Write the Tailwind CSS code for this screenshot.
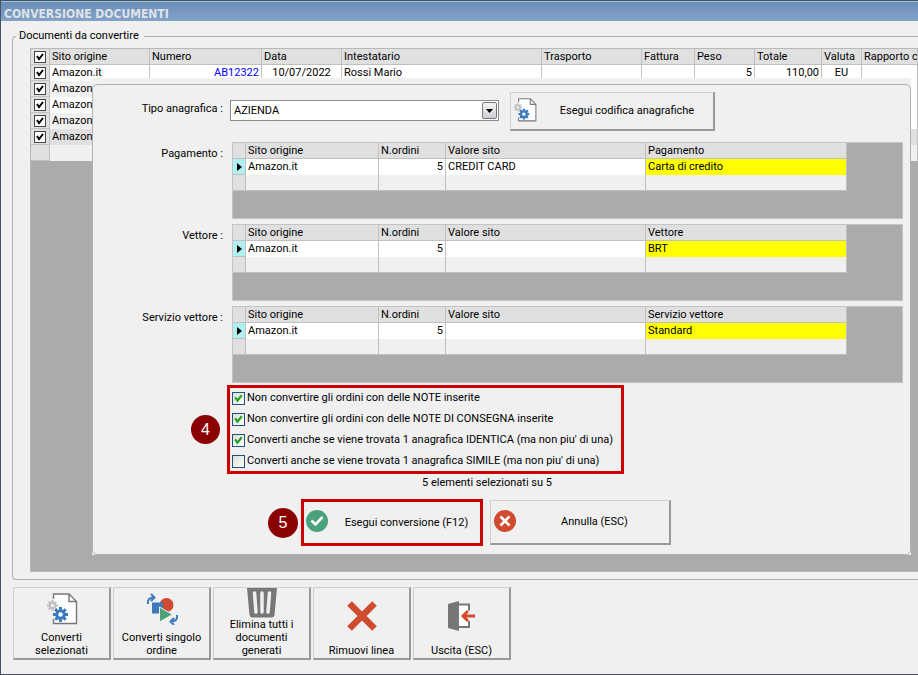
<!DOCTYPE html>
<html lang="it">
<head>
    <meta charset="UTF-8">
    <meta name="viewport" content="width=device-width, initial-scale=1.0">
    <title>Conversione documenti</title>
    <script src="https://cdn.jsdelivr.net/npm/@tailwindcss/browser@4"></script>
</head>
<body class="font-['Roboto','DejaVu_Sans_Condensed',sans-serif] text-[11px] leading-4 text-black bg-[#f0f0f0]">
    <!-- shared icons -->
    <svg class="hidden">
        <symbol id="gear" viewBox="-10 -10 20 20">
            <g fill="none" stroke="currentColor">
                <circle r="5" stroke-width="4"/>
                <path stroke-width="4" d="M0-5V-10M0 5V10M-5 0H-10M5 0H10M-4-4L-7-7M4 4L7 7M-4 4L-7 7M4-4L7-7"/>
            </g>
        </symbol>
        <symbol id="convert" viewBox="0 0 32 32">
            <path d="M7.5 1H23l7.500 7.500v22H7.500z" fill="#fff"/>
            <path d="M7.500 6V1H23l7.500 7.500v22H7.500V26M23 1v7.500h7.500" fill="none" stroke="#777" stroke-width="1.400"/>
            <use href="#gear" x="1" y="7" width="11" height="11" color="#c0c0c0"/>
            <use href="#gear" x="7" y="14" width="15" height="15" color="#3d7bbd"/>
        </symbol>
        <symbol id="tick" viewBox="0 0 12 12">
            <path d="M3 5l2 3 4-5" fill="none" stroke="currentColor" stroke-width="2"/>
        </symbol>
    </svg>

    <div class="min-h-screen flex flex-col overflow-hidden border-t border-l border-b border-[#465063]">
        <header class="h-5 pl-[3px] border-t border-[#a9c3de] bg-linear-to-b from-[#6a8db7] to-[#83a3c8]">
            <h1 class="font-['DejaVu_Sans_Condensed'] text-[12px] leading-6 font-bold text-[#dfe3e8]">CONVERSIONE DOCUMENTI</h1>
        </header>

        <main class="flex-1 pt-2 pl-[11px]">
            <fieldset class="relative min-w-0 flex flex-col border border-r-0 border-[#b0b0b0] rounded-l-[4px] pt-[5px] pl-[17px] pb-[7px]">
                <legend class="-ml-[14px] pl-[3px] pr-[5px] leading-[14px]">Documenti da convertire</legend>

                <div class="h-[524px] bg-[#ababab] border-t border-l border-b border-[#b8b8b8] overflow-hidden">
                    <table class="w-full table-fixed border-separate border-spacing-0 whitespace-nowrap [&_th]:h-4 [&_th]:px-[2px] [&_th]:text-left [&_th]:font-normal [&_th]:bg-[#e0e0e0] [&_th]:border-r [&_th]:border-b [&_th]:border-[#c0c0c0] [&_th]:leading-[15px] [&_th]:overflow-hidden [&_td]:h-4 [&_td]:px-[2px] [&_td]:border-r [&_td]:border-[#c0c0c0] [&_td:first-child]:bg-[#e0e0e0] [&_td:first-child]:border-b [&_td:first-child]:leading-[15px] [&_th:first-child]:px-[3px] [&_td:first-child]:px-[3px]">
                        <colgroup>
                            <col class="w-[19px]"><col class="w-[100px]"><col class="w-[112px]"><col class="w-[80px]"><col class="w-[200px]"><col class="w-[100px]"><col class="w-[53px]"><col class="w-[60px]"><col class="w-[67px]"><col class="w-[40px]"><col>
                        </colgroup>
                        <thead>
                            <tr>
                                <th><label class="relative block size-3"><input type="checkbox" checked aria-label="Seleziona tutti" class="peer block appearance-none size-3 bg-white border border-[#444]"><svg class="hidden peer-checked:block absolute left-0 top-0 size-3"><use href="#tick"/></svg></label></th>
                                <th>Sito origine</th><th>Numero</th><th>Data</th><th>Intestatario</th><th>Trasporto</th><th>Fattura</th><th>Peso</th><th>Totale</th><th>Valuta</th><th>Rapporto cambio</th>
                            </tr>
                        </thead>
                        <tbody>
                            <tr class="bg-white">
                                <td><label class="relative block size-3"><input type="checkbox" checked aria-label="Seleziona riga 1" class="peer block appearance-none size-3 bg-white border border-[#444]"><svg class="hidden peer-checked:block absolute left-0 top-0 size-3"><use href="#tick"/></svg></label></td>
                                <td>Amazon.it</td><td class="text-right text-[#0000ff]">AB12322</td><td class="text-center">10/07/2022</td><td>Rossi Mario</td><td></td><td></td><td class="text-right">5</td><td class="text-right">110,00</td><td class="text-center">EU</td><td></td>
                            </tr>
                            <tr class="bg-[#f0f0f0]">
                                <td><label class="relative block size-3"><input type="checkbox" checked aria-label="Seleziona riga 2" class="peer block appearance-none size-3 bg-white border border-[#444]"><svg class="hidden peer-checked:block absolute left-0 top-0 size-3"><use href="#tick"/></svg></label></td>
                                <td>Amazon.it</td><td></td><td></td><td></td><td></td><td></td><td></td><td></td><td></td><td class="bg-white"></td>
                            </tr>
                            <tr class="bg-white">
                                <td><label class="relative block size-3"><input type="checkbox" checked aria-label="Seleziona riga 3" class="peer block appearance-none size-3 bg-white border border-[#444]"><svg class="hidden peer-checked:block absolute left-0 top-0 size-3"><use href="#tick"/></svg></label></td>
                                <td>Amazon.it</td><td></td><td></td><td></td><td></td><td></td><td></td><td></td><td></td><td></td>
                            </tr>
                            <tr class="bg-[#f0f0f0]">
                                <td><label class="relative block size-3"><input type="checkbox" checked aria-label="Seleziona riga 4" class="peer block appearance-none size-3 bg-white border border-[#444]"><svg class="hidden peer-checked:block absolute left-0 top-0 size-3"><use href="#tick"/></svg></label></td>
                                <td>Amazon.it</td><td></td><td></td><td></td><td></td><td></td><td></td><td></td><td></td><td class="bg-white"></td>
                            </tr>
                            <tr class="bg-[#e0e0e0]">
                                <td><label class="relative block size-3"><input type="checkbox" checked aria-label="Seleziona riga 5" class="peer block appearance-none size-3 bg-white border border-[#444]"><svg class="hidden peer-checked:block absolute left-0 top-0 size-3"><use href="#tick"/></svg></label></td>
                                <td>Amazon.it</td><td></td><td></td><td></td><td></td><td></td><td></td><td></td><td></td><td></td>
                            </tr>
                            <tr class="bg-[#f0f0f0]">
                                <td></td><td></td><td></td><td></td><td></td><td></td><td></td><td></td><td></td><td></td><td></td>
                            </tr>
                        </tbody>
                    </table>
                </div>

                <!-- conversion dialog, over the documents grid -->
                <div role="dialog" aria-label="Conversione" class="absolute left-[79px] right-[7px] top-[35px] bg-[#f0f0f0] pt-[6px]">
                    <form class="border border-[#b0b0b0] rounded-[5px] pt-[7px] pr-[7px] pb-2">
                        <div class="flex items-start">
                            <label for="tipo" class="w-[130px] pt-[9px] text-right">Tipo anagrafica :</label>
                            <div class="relative ml-[7px] mt-2 w-[269px]">
                                <select id="tipo" class="block w-full h-[21px] appearance-none bg-white border border-[#8c8c8c] pl-[3px] outline-none">
                                    <option>AZIENDA</option>
                                </select>
                                <span class="absolute right-[2px] top-[2px] w-[15px] h-[17px] flex items-center justify-center rounded-[2px] border border-[#777] bg-linear-to-b from-[#f4f4f4] to-[#cfd0d4] pointer-events-none">
                                    <svg class="w-[7px] h-1" viewBox="0 0 7 4"><path d="M0 0h7L3.500 4z"/></svg>
                                </span>
                            </div>
                            <button type="button" class="relative ml-[11px] w-[205px] h-[39px] flex items-center border border-t-[#d0d0d0] border-l-[#d0d0d0] border-r-2 border-b-2 border-r-[#999] border-b-[#999]">
                                <svg class="absolute left-[2px] top-[5px] size-6"><use href="#convert"/></svg>
                                <span class="flex-1 pl-[30px]">Esegui codifica anagrafiche</span>
                            </button>
                        </div>

                        <div class="mt-[11px] flex flex-col gap-[5px] [&_table]:w-[614px] [&_table]:table-fixed [&_table]:border-separate [&_table]:border-spacing-0 [&_th]:h-4 [&_th]:px-[2px] [&_th]:text-left [&_th]:font-normal [&_th]:leading-[15px] [&_th]:bg-[#e0e0e0] [&_th]:border-r [&_th]:border-b [&_th]:border-[#c0c0c0] [&_td]:h-4 [&_td]:px-[2px] [&_td]:border-r [&_td]:border-[#c0c0c0] [&_tr:last-child_td]:border-b [&_tr:last-child_td]:leading-[15px]">
                            <div class="flex">
                                <div id="lbl-pagamento" class="w-[130px] pt-1 text-right">Pagamento :</div>
                                <div class="ml-[9px] flex-1 h-[77px] bg-[#ababab] border border-[#c4c4c4]">
                                    <table aria-labelledby="lbl-pagamento">
                                        <colgroup><col class="w-[13px]"><col class="w-[133px]"><col class="w-[67px]"><col class="w-[200px]"><col></colgroup>
                                        <thead><tr><th></th><th>Sito origine</th><th>N.ordini</th><th>Valore sito</th><th>Pagamento</th></tr></thead>
                                        <tbody>
                                            <tr class="bg-white"><td class="bg-[#b0f0f0] border-b"><svg class="ml-[2px] w-[5px] h-2" viewBox="0 0 5 8"><path d="M0 0l5 4-5 4z"/></svg></td><td>Amazon.it</td><td class="text-right">5</td><td>CREDIT CARD</td><td class="bg-[#ffff00] shadow-[0_1px_0_#dddd00]">Carta di credito</td></tr>
                                            <tr class="bg-[#f0f0f0]"><td class="bg-[#e0e0e0]"></td><td></td><td></td><td></td><td></td></tr>
                                        </tbody>
                                    </table>
                                </div>
                            </div>
                            <div class="flex">
                                <div id="lbl-vettore" class="w-[130px] pt-1 text-right">Vettore :</div>
                                <div class="ml-[9px] flex-1 h-[77px] bg-[#ababab] border border-[#c4c4c4]">
                                    <table aria-labelledby="lbl-vettore">
                                        <colgroup><col class="w-[13px]"><col class="w-[133px]"><col class="w-[67px]"><col class="w-[200px]"><col></colgroup>
                                        <thead><tr><th></th><th>Sito origine</th><th>N.ordini</th><th>Valore sito</th><th>Vettore</th></tr></thead>
                                        <tbody>
                                            <tr class="bg-white"><td class="bg-[#b0f0f0] border-b"><svg class="ml-[2px] w-[5px] h-2" viewBox="0 0 5 8"><path d="M0 0l5 4-5 4z"/></svg></td><td>Amazon.it</td><td class="text-right">5</td><td></td><td class="bg-[#ffff00] shadow-[0_1px_0_#dddd00]">BRT</td></tr>
                                            <tr class="bg-[#f0f0f0]"><td class="bg-[#e0e0e0]"></td><td></td><td></td><td></td><td></td></tr>
                                        </tbody>
                                    </table>
                                </div>
                            </div>
                            <div class="flex">
                                <div id="lbl-servizio" class="w-[130px] pt-1 text-right">Servizio vettore :</div>
                                <div class="ml-[9px] flex-1 h-[77px] bg-[#ababab] border border-[#c4c4c4]">
                                    <table aria-labelledby="lbl-servizio">
                                        <colgroup><col class="w-[13px]"><col class="w-[133px]"><col class="w-[67px]"><col class="w-[200px]"><col></colgroup>
                                        <thead><tr><th></th><th>Sito origine</th><th>N.ordini</th><th>Valore sito</th><th>Servizio vettore</th></tr></thead>
                                        <tbody>
                                            <tr class="bg-white"><td class="bg-[#b0f0f0] border-b"><svg class="ml-[2px] w-[5px] h-2" viewBox="0 0 5 8"><path d="M0 0l5 4-5 4z"/></svg></td><td>Amazon.it</td><td class="text-right">5</td><td></td><td class="bg-[#ffff00] shadow-[0_1px_0_#dddd00]">Standard</td></tr>
                                            <tr class="bg-[#f0f0f0]"><td class="bg-[#e0e0e0]"></td><td></td><td></td><td></td><td></td></tr>
                                        </tbody>
                                    </table>
                                </div>
                            </div>
                        </div>

                        <div class="mt-[2px] ml-[98px] flex items-center gap-[7px]">
                            <span class="size-[29px] rounded-full bg-[#8b0000] text-white font-['Liberation_Sans'] text-[16px] flex items-center justify-center">4</span>
                            <div class="w-[397px] h-[89px] border-[3px] border-[#cc0000] pl-[2px] flex flex-col justify-center gap-[5px] whitespace-nowrap">
                                <label class="relative flex items-center gap-[2px]"><input type="checkbox" checked class="peer shrink-0 appearance-none size-[13px] border border-[#1c5180] bg-linear-to-br from-[#dcdcd7] to-white"><svg class="hidden peer-checked:block absolute left-0 top-[2px] size-[13px] text-[#21a121]"><use href="#tick"/></svg>Non convertire gli ordini con delle NOTE inserite</label>
                                <label class="relative flex items-center gap-[2px]"><input type="checkbox" checked class="peer shrink-0 appearance-none size-[13px] border border-[#1c5180] bg-linear-to-br from-[#dcdcd7] to-white"><svg class="hidden peer-checked:block absolute left-0 top-[2px] size-[13px] text-[#21a121]"><use href="#tick"/></svg>Non convertire gli ordini con delle NOTE DI CONSEGNA inserite</label>
                                <label class="relative flex items-center gap-[2px]"><input type="checkbox" checked class="peer shrink-0 appearance-none size-[13px] border border-[#1c5180] bg-linear-to-br from-[#dcdcd7] to-white"><svg class="hidden peer-checked:block absolute left-0 top-[2px] size-[13px] text-[#21a121]"><use href="#tick"/></svg>Converti anche se viene trovata 1 anagrafica IDENTICA (ma non piu' di una)</label>
                                <label class="relative flex items-center gap-[2px]"><input type="checkbox" class="peer shrink-0 appearance-none size-[13px] border border-[#1c5180] bg-linear-to-br from-[#dcdcd7] to-white"><svg class="hidden peer-checked:block absolute left-0 top-[2px] size-[13px] text-[#21a121]"><use href="#tick"/></svg>Converti anche se viene trovata 1 anagrafica SIMILE (ma non piu' di una)</label>
                            </div>
                        </div>

                        <p class="mt-[1px] pr-[22px] text-center">5 elementi selezionati su 5</p>

                        <div class="mt-2 ml-[175px] flex items-center">
                            <span class="size-[30px] rounded-full bg-[#8b0000] text-white font-['Liberation_Sans'] text-[16px] flex items-center justify-center">5</span>
                            <button type="submit" class="relative ml-[3px] w-[182px] h-[47px] border-[3px] border-[#cc0000]">
                                <svg class="absolute left-[2px] top-2 size-[22px]" viewBox="0 0 22 22"><circle cx="11" cy="11" r="11" fill="#4aa27c"/><path d="M5.500 10.500l4 4 7-7.500" fill="none" stroke="#fff" stroke-width="2.600"/></svg>
                                <span class="pl-[29px]">Esegui conversione (F12)</span>
                            </button>
                            <button type="button" class="relative ml-[7px] w-[181px] h-[45px] border border-t-[#d0d0d0] border-l-[#d0d0d0] border-r-2 border-b-2 border-r-[#999] border-b-[#999]">
                                <svg class="absolute left-[3px] top-[9px] size-[22px]" viewBox="0 0 22 22"><circle cx="11" cy="11" r="11" fill="#d04a2f"/><path d="M6.500 6.500l9 9M15.500 6.500l-9 9" stroke="#fff" stroke-width="2.600"/></svg>
                                <span class="pl-[29px]">Annulla (ESC)</span>
                            </button>
                        </div>
                    </form>
                </div>
            </fieldset>

            <nav class="mt-[7px] pl-[1px] flex gap-[2px] [&>button]:w-[98px] [&>button]:h-[73px] [&>button]:flex [&>button]:flex-col [&>button]:items-center [&>button]:justify-end [&>button]:pb-[1px] [&>button]:leading-[13px] [&>button]:border [&>button]:border-t-[#d0d0d8] [&>button]:border-l-[#d0d0d8] [&>button]:border-r-2 [&>button]:border-b-2 [&>button]:border-r-[#999] [&>button]:border-b-[#999]">
                <button type="button">
                    <svg class="size-8 mb-[6px]"><use href="#convert"/></svg>
                    <span>Converti<br>selezionati</span>
                </button>
                <button type="button">
                    <svg class="size-8 mb-[6px]" viewBox="0 0 32 32">
                        <circle cx="20.500" cy="12" r="7" fill="#d04a2f"/>
                        <path d="M6 9.500h11v11H6z" fill="#3d7bbd"/>
                        <path d="M13.500 14l13 7.500-13 7.500z" fill="#4aa27c" stroke="#f0f0f0"/>
                        <g fill="none" stroke="#3d7bbd" stroke-width="2"><path d="M2 11c-.5-4 1-6.500 6-6.500M5 1l3.500 3.500L5 8M31 22c.5 4-1 6.500-6 6.500M28 25l-3.500 3.500L28 32"/></g>
                    </svg>
                    <span>Converti singolo<br>ordine</span>
                </button>
                <button type="button">
                    <svg class="w-8 h-[30px]" viewBox="0 0 32 30">
                        <path d="M1 0h30l-2.500 27a3 3 0 0 1-3 2.500h-19a3 3 0 0 1-3-2.500z" fill="#777"/>
                        <path d="M8.500 5l1.500 19M16 5v19M23.500 5l-1.500 19" stroke="#f0f0f0" stroke-width="3.500" stroke-linecap="round"/>
                    </svg>
                    <span>Elimina tutti i<br>documenti<br>generati</span>
                </button>
                <button type="button">
                    <svg class="size-8 mb-3" viewBox="0 0 32 32"><path d="M3.500 3.500l25 25M28.500 3.500l-25 25" stroke="#d04a2f" stroke-width="6.500"/></svg>
                    <span>Rimuovi linea</span>
                </button>
                <button type="button">
                    <svg class="size-8 mb-3" viewBox="0 0 32 32">
                        <path d="M13 4h10v23H13z" fill="#fff"/>
                        <path d="M13 4.500h10v6M13 27h10v-6" fill="none" stroke="#777" stroke-width="2"/>
                        <path d="M2 4l11-3v30L2 28z" fill="#777"/>
                        <path d="M29 16H18M22 11l-5 5 5 5" fill="none" stroke="#d04a2f" stroke-width="3"/>
                    </svg>
                    <span>Uscita (ESC)</span>
                </button>
            </nav>
        </main>
    </div>
</body>
</html>
